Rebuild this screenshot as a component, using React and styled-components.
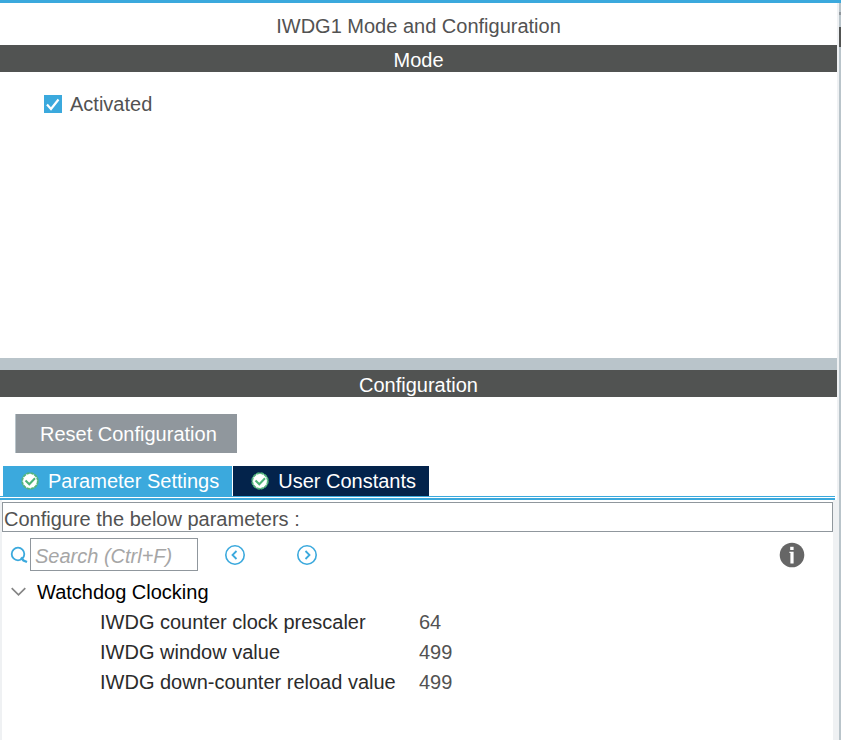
import React, { useState } from "react";
import styled, { createGlobalStyle } from "styled-components";

const blue = "#3ba9dd";
const slate = "#515352";
const steel = "#b9c4ca";
const gutter = "#eff1f3";
const outline = "#90979d";

const GlobalStyle = createGlobalStyle`
  * { box-sizing: border-box; }
  body {
    margin: 0;
    background: #fff;
    color: #525252;
    font-family: "Liberation Sans", Arial, sans-serif;
    font-size: 20px;
    line-height: 30px;
  }
  button, input { font: inherit; }
`;

const Page = styled.div`
  display: flex;
  flex-direction: column;
  min-height: 100vh;
  border-top: 3px solid ${blue};
`;

const Workspace = styled.div`
  display: flex;
  flex: 1;
`;

const Panel = styled.main`
  display: flex;
  flex-direction: column;
  flex: 1;
  min-width: 0;
  border-right: 2px solid ${gutter};
`;

const EdgeStrip = styled.aside`
  flex: 0 0 2px;
  background: ${steel};
`;

const EdgeMark = styled.div`
  height: ${(p) => p.$height}px;
  margin-top: ${(p) => p.$gap}px;
  background: ${(p) => p.$color};
`;

const Title = styled.h1`
  margin: 0;
  padding: 2px 0 0;
  height: 42px;
  font-size: 20px;
  font-weight: 400;
  line-height: 42px;
  text-align: center;
`;

const SectionBar = styled.h2`
  margin: 0;
  height: 27px;
  padding-top: 2px;
  background: ${slate};
  color: #fff;
  font-size: 20px;
  font-weight: 400;
  line-height: 27px;
  text-align: center;
`;

const ModeBody = styled.section`
  min-height: 286px;
  padding: 17px 44px;
`;

const CheckLabel = styled.label`
  display: inline-flex;
  align-items: center;
  gap: 8px;
`;

const CheckArea = styled.span`
  display: grid;
  width: 18px;
  height: 18px;

  > * { grid-area: 1 / 1; }
`;

const CheckInput = styled.input`
  appearance: none;
  width: 18px;
  height: 18px;
  margin: 0;
  border: 1px solid ${blue};

  &:checked { background: ${blue}; }
  &:not(:checked) + svg { visibility: hidden; }
`;

const Splitter = styled.div`
  height: 12px;
  background: ${steel};
`;

const ConfigBody = styled.section`
  display: flex;
  flex-direction: column;
  flex: 1;
`;

const ResetButton = styled.button`
  align-self: flex-start;
  height: 39px;
  margin: 17px 15px 13px;
  padding: 0 20px 0 24px;
  border: 0;
  border-left: 1px solid ${steel};
  border-radius: 0;
  background: ${outline};
  color: #fff;
`;

const TabList = styled.div`
  display: flex;
  gap: 1px;
  padding-left: 3px;
`;

const TabButton = styled.button`
  display: flex;
  align-items: center;
  gap: 9px;
  height: 30px;
  padding: 0 13px 0 18px;
  border: 0;
  background: ${(p) => (p.$active ? blue : "#03234b")};
  color: #fff;
`;

const TabRule = styled.div`
  height: 4px;
  margin-right: 2px;
  border-top: 1px solid ${blue};
  border-bottom: 2px solid ${blue};
`;

const Settings = styled.div`
  flex: 1;
  padding-top: 2px;
  border-left: 2px solid ${gutter};
  border-right: 4px solid ${gutter};
`;

const Hint = styled.p`
  height: 30px;
  margin: 0;
  padding: 1px 1px 0;
  border: 1px solid ${outline};
`;

const Toolbar = styled.div`
  display: flex;
  align-items: center;
  padding: 6px 28px 6px 8px;
`;

const SearchLabel = styled.label`
  display: flex;
  align-items: center;
  gap: 2px;
`;

const SearchInput = styled.input`
  width: 168px;
  height: 33px;
  padding: 3px 4px 0;
  border: 1px solid ${outline};
  border-radius: 0;
  background: #fff;

  &::placeholder {
    color: #a6a6a6;
    font-style: italic;
    opacity: 1;
  }
`;

const Steps = styled.div`
  display: flex;
  gap: 50px;
  margin-left: 26px;
`;

const IconButton = styled.button`
  display: flex;
  padding: 0;
  border: 0;
  background: none;
`;

const InfoButton = styled(IconButton)`
  margin-left: auto;
`;

const GroupToggle = styled.button`
  display: flex;
  align-items: center;
  gap: 11px;
  height: 30px;
  padding: 0 9px;
  border: 0;
  background: none;
  color: #000;
`;

const ParamTable = styled.table`
  width: 100%;
  border-collapse: collapse;
  table-layout: fixed;
`;

const ParamName = styled.th`
  width: 415px;
  height: 30px;
  padding: 0 0 0 98px;
  color: #2b2b2b;
  font-weight: 400;
  text-align: left;
  white-space: nowrap;
`;

const ParamValue = styled.td`
  padding: 0 2px;
`;

const Tick = () => (
  <svg width="18" height="18" viewBox="0 0 18 18" fill="none" pointerEvents="none" aria-hidden="true">
    <path d="M3 9.5 7 14 14.5 4.5" stroke="#fff" strokeWidth="2.2" />
  </svg>
);

const StatusOk = () => (
  <svg width="18" height="18" viewBox="0 0 18 18" fill="none" aria-hidden="true">
    <circle cx="9" cy="9" r="7.8" fill="#fff" stroke="#54b57c" strokeWidth="1.8" strokeDasharray="3.4 0.7" />
    <path d="M4.5 8.5 8.3 12.3 14 6.3" stroke="#4db277" strokeWidth="2" />
  </svg>
);

const SearchIcon = () => (
  <svg width="18" height="18" viewBox="0 0 18 18" fill="none" aria-hidden="true">
    <circle cx="8" cy="8" r="6.3" stroke={blue} strokeWidth="1.8" />
    <path d="M11 11.5 13.5 14.5 17 16" stroke={blue} strokeWidth="2.4" />
  </svg>
);

const StepIcon = ({ forward }) => (
  <svg width="22" height="22" viewBox="0 0 22 22" fill="none" aria-hidden="true">
    <circle cx="11" cy="11" r="9.2" stroke={blue} strokeWidth="1.6" />
    <path d={forward ? "M9.5 7 13.5 11 9.5 15" : "M12.5 7 8.5 11 12.5 15"} stroke={blue} strokeWidth="1.8" />
  </svg>
);

const InfoIcon = () => (
  <svg width="26" height="26" viewBox="0 0 26 26" aria-hidden="true">
    <circle cx="13" cy="13" r="12.3" fill="#666" />
    <rect x="11.2" y="4.8" width="3.4" height="3.2" fill="#fff" />
    <path d="M10.4 9.8H14.6V21.4H11.4V11H10.4Z" fill="#fff" />
  </svg>
);

const Chevron = ({ open }) => (
  <svg width="15" height="10" viewBox="0 0 15 10" fill="none" aria-hidden="true">
    <path d={open ? "M.7 1.2 7.5 7.8 14.3 1.2" : "M4.5 0 10 5 4.5 10"} stroke="#858585" strokeWidth="1.7" />
  </svg>
);

const tabs = ["Parameter Settings", "User Constants"];

const parameters = [
  { name: "IWDG counter clock prescaler", value: "64" },
  { name: "IWDG window value", value: "499" },
  { name: "IWDG down-counter reload value", value: "499" },
];

export default function App() {
  const [activeTab, setActiveTab] = useState(tabs[0]);
  const [open, setOpen] = useState(true);

  return (
    <Page>
      <GlobalStyle />
      <Workspace>
        <Panel>
          <Title>IWDG1 Mode and Configuration</Title>
          <SectionBar>Mode</SectionBar>
          <ModeBody>
            <CheckLabel>
              <CheckArea>
                <CheckInput type="checkbox" defaultChecked />
                <Tick />
              </CheckArea>
              Activated
            </CheckLabel>
          </ModeBody>
          <Splitter />
          <SectionBar>Configuration</SectionBar>
          <ConfigBody>
            <ResetButton type="button">Reset Configuration</ResetButton>
            <TabList role="tablist">
              {tabs.map((tab) => (
                <TabButton
                  key={tab}
                  type="button"
                  role="tab"
                  aria-selected={tab === activeTab}
                  $active={tab === activeTab}
                  onClick={() => setActiveTab(tab)}
                >
                  <StatusOk />
                  {tab}
                </TabButton>
              ))}
            </TabList>
            <TabRule />
            <Settings>
              <Hint>Configure the below parameters :</Hint>
              <Toolbar>
                <SearchLabel>
                  <SearchIcon />
                  <SearchInput type="text" aria-label="Search" placeholder="Search (Ctrl+F)" />
                </SearchLabel>
                <Steps>
                  <IconButton type="button" aria-label="Previous match">
                    <StepIcon />
                  </IconButton>
                  <IconButton type="button" aria-label="Next match">
                    <StepIcon forward />
                  </IconButton>
                </Steps>
                <InfoButton type="button" aria-label="Information">
                  <InfoIcon />
                </InfoButton>
              </Toolbar>
              <GroupToggle type="button" aria-expanded={open} onClick={() => setOpen(!open)}>
                <Chevron open={open} />
                Watchdog Clocking
              </GroupToggle>
              {open && (
                <ParamTable>
                  <tbody>
                    {parameters.map((p) => (
                      <tr key={p.name}>
                        <ParamName scope="row">{p.name}</ParamName>
                        <ParamValue>{p.value}</ParamValue>
                      </tr>
                    ))}
                  </tbody>
                </ParamTable>
              )}
            </Settings>
          </ConfigBody>
        </Panel>
        <EdgeStrip>
          <EdgeMark $gap={9} $height={3} $color={outline} />
          <EdgeMark $gap={12} $height={20} $color={slate} />
        </EdgeStrip>
      </Workspace>
    </Page>
  );
}
